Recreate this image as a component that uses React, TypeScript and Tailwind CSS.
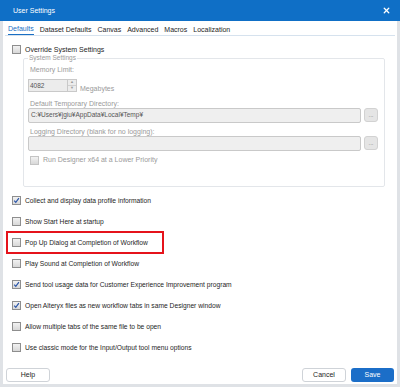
import { X } from "lucide-react";

const options = [
  { label: "Collect and display data profile information", checked: true },
  { label: "Show Start Here at startup", checked: false },
  { label: "Pop Up Dialog at Completion of Workflow", checked: false, highlight: true },
  { label: "Play Sound at Completion of Workflow", checked: false },
  { label: "Send tool usage data for Customer Experience Improvement program", checked: true },
  { label: "Open Alteryx files as new workflow tabs in same Designer window", checked: true },
  { label: "Allow multiple tabs of the same file to be open", checked: false },
  { label: "Use classic mode for the Input/Output tool menu options", checked: false },
];

const tabs = ["Defaults", "Dataset Defaults", "Canvas", "Advanced", "Macros", "Localization"];

function Box({ checked = false, faded = false }: { checked?: boolean; faded?: boolean }) {
  return (
    <span
      className={`flex h-[9px] w-[9px] shrink-0 items-center justify-center border bg-gradient-to-b from-[#f2f2f2] to-[#d8d8d8] ${
        faded ? "border-[#c4c4c4]" : "border-[#8e8e8e]"
      }`}
    >
      {checked && (
        <svg width="7" height="7" viewBox="0 0 7 7">
          <path d="M1.2 3.6 L2.8 5.4 L5.9 1.2" fill="none" stroke="#2a55a8" strokeWidth="1.2" />
        </svg>
      )}
    </span>
  );
}

function PathRow({ value }: { value?: string }) {
  return (
    <div className="flex items-center gap-[3px]">
      <div className="flex h-[15px] w-[333px] items-center rounded-[2px] border border-[#c9c9c9] bg-[#efefef] px-[2px] text-[6.5px] text-[#555]">
        {value}
      </div>
      <div className="flex h-[14px] w-[14px] items-center justify-center rounded-[3px] border border-[#d2d2d2] bg-[#e5e5e5] text-[6px] leading-none text-[#777]">
        ...
      </div>
    </div>
  );
}

export default function App() {
  return (
    <div className="flex h-[387px] w-[400px] flex-col bg-white text-[7px] leading-[8px] text-[#1e1e1e] [font-family:'Liberation_Sans',Arial,sans-serif]">
      <div className="flex h-[21px] shrink-0 items-center justify-between bg-[#0f6fc6] pl-[13px] pr-[9px] text-white">
        <span className="text-[7px]">User Settings</span>
        <X size={9} strokeWidth={3.5} />
      </div>

      <div className="flex flex-1 flex-col border-x-[3px] border-b-[3px] border-[#dfe2e6]">
        <div className="mr-[2px] ml-[2px] flex h-[15px] items-end gap-[6px] border-b border-[#d6e2ee] pl-[3px]">
          {tabs.map((t, i) => (
            <span
              key={t}
              className={`pb-[2px] leading-none ${i === 0 ? "border-b border-[#1a6fc4] text-[#1a6fc4]" : ""}`}
            >
              {t}
            </span>
          ))}
        </div>

        <div className="flex flex-col pl-[9px] pt-[9px]">
          <label className="flex items-center gap-[4px]">
            <Box />
            <span>Override System Settings</span>
          </label>

          <fieldset className="ml-[11px] mt-[1px] h-[132px] w-[362px] rounded-[2px] border border-[#e3e6ea] px-[4px] text-[#9a9a9a]">
            <legend className="px-[1px] text-[6.5px] leading-none">System Settings</legend>
            <div className="ml-[2px] mt-[4px]">Memory Limit:</div>
            <div className="mt-[5px] flex items-end gap-[3px]">
              <div className="flex h-[13px] w-[49px] border border-[#c9c9c9] bg-[#ececec]">
                <span className="flex-1 pl-[1px] text-[6.5px] leading-[11px] text-[#555]">4082</span>
                <span className="flex w-[9px] flex-col border-l border-[#c9c9c9]">
                  <span className="flex flex-1 items-center justify-center border-b border-[#d0d0d0] text-[4px] leading-none">▲</span>
                  <span className="flex flex-1 items-center justify-center text-[4px] leading-none">▼</span>
                </span>
              </div>
              <span className="leading-none">Megabytes</span>
            </div>
            <div className="ml-[2px] mt-[8px]">Default Temporary Directory:</div>
            <PathRow value="C:¥Users¥jgiu¥AppData¥Local¥Temp¥" />
            <div className="ml-[2px] mt-[5px]">Logging Directory (blank for no logging):</div>
            <PathRow />
            <label className="ml-[2px] mt-[5px] flex items-center gap-[4px]">
              <Box faded />
              <span>Run Designer x64 at a Lower Priority</span>
            </label>
          </fieldset>

          <div className="mt-[3px] flex flex-col text-[6.7px]">
            {options.map((o) => (
              <div
                key={o.label}
                className={`-ml-[5px] flex h-[21px] w-[156px] items-center gap-[4px] pl-[5px] ${
                  o.highlight ? "outline-[2px] outline-[#e5131b] outline-solid -outline-offset-[1px]" : ""
                }`}
              >
                <Box checked={o.checked} />
                <span className="whitespace-nowrap">{o.label}</span>
              </div>
            ))}
          </div>
        </div>

        <div className="mt-auto flex items-center justify-between px-[3px] pb-[2px]">
          <button className="h-[14px] w-[44px] rounded-[3px] border border-[#cfd3d8] bg-white text-[7px]">Help</button>
          <div className="flex gap-[5px]">
            <button className="h-[14px] w-[44px] rounded-[3px] border border-[#cfd3d8] bg-white text-[7px]">Cancel</button>
            <button className="h-[14px] w-[43px] rounded-[3px] bg-[#1b6ec8] text-[7px] text-white">Save</button>
          </div>
        </div>
      </div>
    </div>
  );
}
